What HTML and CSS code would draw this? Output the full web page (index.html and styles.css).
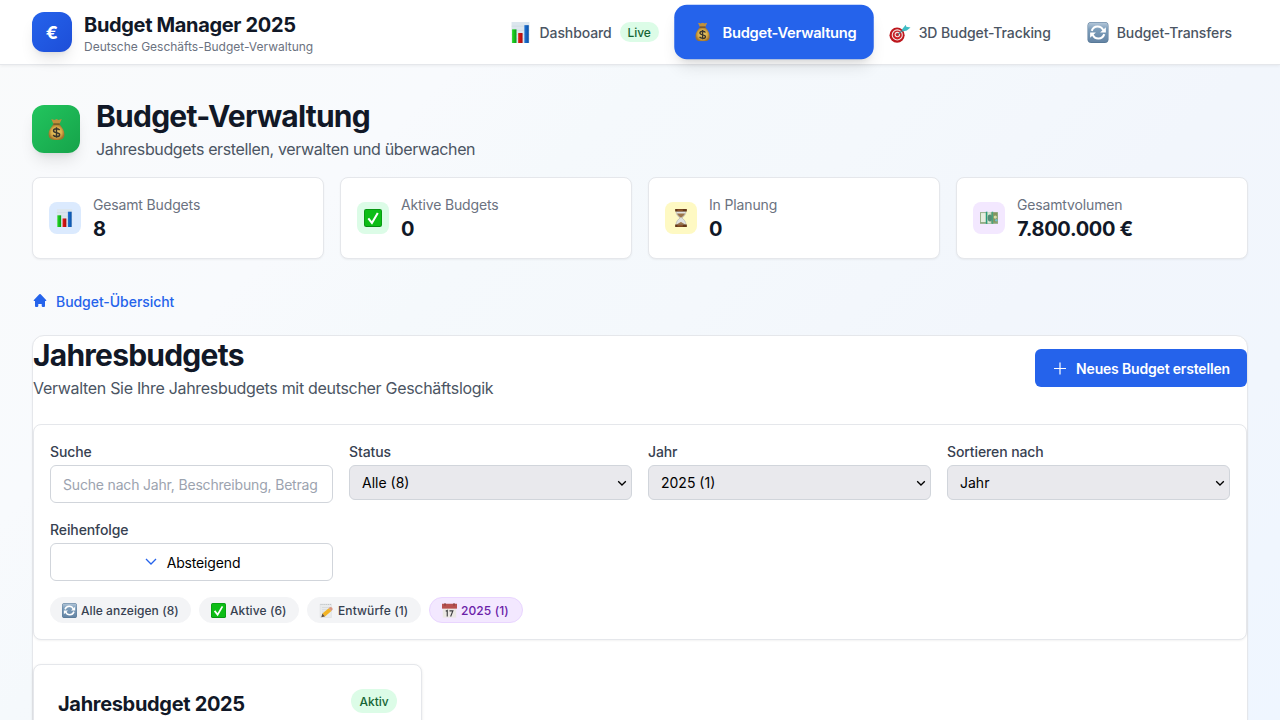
FILE: index.html
```html
<!DOCTYPE html>
<html lang="de">
<head>
<meta charset="utf-8">
<title>Budget Manager 2025</title>
<link rel="stylesheet" href="styles.css">
</head>
<body>
<svg class="sprite" aria-hidden="true">
  <defs>
    <linearGradient id="bar-g"><stop offset="0" stop-color="#27dc25"/><stop offset="1" stop-color="#079c16"/></linearGradient>
    <linearGradient id="bar-r"><stop offset="0" stop-color="#e51c17"/><stop offset="1" stop-color="#a90b0c"/></linearGradient>
    <linearGradient id="bar-b"><stop offset="0" stop-color="#2374d3"/><stop offset="1" stop-color="#0750a8"/></linearGradient>
    <linearGradient id="steel" x2="0" y2="1"><stop offset="0" stop-color="#b5c8da"/><stop offset=".35" stop-color="#7c9dba"/><stop offset="1" stop-color="#6585a5"/></linearGradient>
    <radialGradient id="gold"><stop offset="0" stop-color="#edd074"/><stop offset=".65" stop-color="#d9ad48"/><stop offset="1" stop-color="#a0712c"/></radialGradient>
    <symbol id="chart" viewBox="0 0 20 20">
      <path fill="#dce6ee" d="M1 0h17v20H1z"/><path stroke="#c5d1dc" stroke-width=".4" d="M1 4h17M1 8h17M1 12h17M1 16h17"/>
      <path fill="url(#bar-g)" d="M1.500 7h4.200v13H1.500z"/><path fill="url(#bar-r)" d="M7.300 10.500h4.200V20H7.300z"/><path fill="url(#bar-b)" d="M13.200 3h4.200v17h-4.200z"/>
    </symbol>
    <symbol id="bag" viewBox="0 0 20 20">
      <path fill="#c0903c" d="M5 0l3 1 2-1 2 1 3-1-2 4.500H7z"/>
      <path fill="url(#gold)" d="M7 5h6c1 2 5 5 4.500 10.500C17 19 15 20 10 20s-7-1-7.500-4.500C2 10 6 7 7 5z"/>
      <path fill="none" stroke="#76501f" stroke-width="1.200" d="M7 4.800h6"/>
      <path fill="none" stroke="#38342b" stroke-width="1.400" d="M13 10.500c-1-1.800-5.800-1.800-5.800.6 0 2.700 5.800 1.200 5.800 3.800 0 2.300-4.800 2.300-6.200.3M10 7.800v10"/>
    </symbol>
    <symbol id="target" viewBox="0 0 20 20">
      <circle cx="7.200" cy="12.500" r="7.200" fill="#bd171d"/><circle cx="7.400" cy="12.300" r="5.300" fill="#f2e7e4"/><circle cx="7.400" cy="12.300" r="4.300" fill="#cb1e25"/><circle cx="7.500" cy="12" r="2.600" fill="#f2e7e4"/><circle cx="7.500" cy="12" r="1.600" fill="#c52128"/>
      <path stroke="#4c7780" stroke-width="1.200" d="M8 12l7-6.500"/><path fill="#3fbcc4" d="M12 7l3.500-4.500.5 2 4 .8-3.500 2.700-4 1z"/>
    </symbol>
    <symbol id="sync" viewBox="0 0 20 20">
      <rect width="20" height="20" rx="3.500" fill="#587998"/><rect x=".5" y=".5" width="19" height="18.500" rx="3" fill="url(#steel)"/>
      <path fill="none" stroke="#fff" stroke-width="2" d="M4 8.500C6 3 13 3 15 8M16 11.500C14 17 7 17 5 12"/>
      <path fill="#fff" d="M17.500 5v5H12zM2.500 15v-5H8z"/>
    </symbol>
    <symbol id="check" viewBox="0 0 20 20">
      <rect width="20" height="20" rx="2.500" fill="#078b12"/><rect x=".7" y=".7" width="18.600" height="18.300" rx="2" fill="#0dbd16"/>
      <path fill="none" stroke="#fff" stroke-width="2.300" d="M4.800 10.500l4 5L15.300 4.500"/>
    </symbol>
    <symbol id="hourglass" viewBox="0 0 20 20">
      <path fill="#dfe2e1" stroke="#aaa79f" stroke-width=".6" d="M4.500 2.500h11c0 4-2.500 6-4.500 7.500 2 1.500 4.500 3.500 4.500 7.500h-11c0-4 2.500-6 4.500-7.500C7 8.500 4.500 6.500 4.500 2.500z"/>
      <path fill="#9c764b" d="M5.500 5h9c-1 2.500-3 3.500-4.500 4.700C8.500 8.500 6.500 7.500 5.500 5zM5.500 17.300c1-1.300 3-1.800 4.500-2.800 1 1 3.500 1.500 4.500 2.800z"/>
      <path fill="#633718" d="M3.500 0h13v2.700h-13zM3.500 17.300h13V20h-13z"/><path fill="#b77238" d="M6 .8h6v.9H6zM6 18.200h6v.9H6z"/>
    </symbol>
    <symbol id="money" viewBox="0 0 20 20">
      <path fill="#8fab82" d="M0 3.500h20v13H0z"/><path fill="#e6ede0" d="M1 4.500h5.500v10H1z"/><path fill="#289c7d" d="M6.500 3h1.800v13.500H6.500z"/><path fill="#d9e9d5" d="M8.300 3.500H12v12.500H8.300z"/>
      <ellipse cx="11" cy="10" rx="2.500" ry="3.800" fill="#568c78"/><path fill="#48a37d" d="M13 3h1.700v13.500H13z"/><path fill="#82955f" d="M14.700 4H19v11h-4.300z"/><circle cx="17" cy="9" r="1.800" fill="#d7dda9"/><circle cx="18" cy="12.500" r="1.300" fill="#6fc0cc"/>
    </symbol>
    <symbol id="memo" viewBox="0 0 20 20">
      <path fill="#e9ebec" stroke="#d5d9dc" stroke-width=".6" d="M1.500 1.500h15v18h-15z"/><path stroke="#a9afb3" stroke-width=".8" stroke-dasharray="1.500 1" d="M2 2h14"/><path stroke="#c3c9cc" stroke-width=".6" d="M4 6h11M4 9h9M4 12h7M4 15h6"/>
      <path fill="#f3b323" d="M4.500 14L13 7l3.500 3.500L8 18z"/><path fill="#d99580" d="M13 7l1.700-1.600q3.500 0 3.500 3.300L16.500 10.500z"/><path fill="#665039" d="M3 19l1.500-5L8 18z"/>
    </symbol>
    <symbol id="calendar" viewBox="0 0 20 20">
      <path fill="#ebe8e4" d="M1 5h18v14.500H1z"/><path fill="#b85150" d="M0 1h20v6.500H0z"/><path stroke="#763839" stroke-width="1.200" d="M4 0v3.500M16 0v3.500"/>
      <path fill="none" stroke="#3c3d40" stroke-width="1.500" d="M5 11l2-1v8M10 10.500h4.500L11.500 18"/>
    </symbol>
  </defs>
</svg>
<div class="page">
  <header class="topbar">
    <div class="brand">
      <div class="logo">€</div>
      <div class="brand-text"><div class="brand-name">Budget Manager 2025</div><div class="brand-sub">Deutsche Geschäfts-Budget-Verwaltung</div></div>
    </div>
    <nav class="nav">
      <a class="nav-item"><svg><use href="#chart"/></svg><span>Dashboard</span><span class="live">Live</span></a>
      <a class="nav-item active"><svg class="bag-icon"><use href="#bag"/></svg><span>Budget-Verwaltung</span></a>
      <a class="nav-item"><svg><use href="#target"/></svg><span>3D Budget-Tracking</span></a>
      <a class="nav-item"><svg><use href="#sync"/></svg><span>Budget-Transfers</span></a>
    </nav>
  </header>
  <main class="main">
    <section class="hero">
      <div class="hero-icon"><svg><use href="#bag"/></svg></div>
      <div><h1 class="title">Budget-Verwaltung</h1><p class="subtitle hero-sub">Jahresbudgets erstellen, verwalten und überwachen</p></div>
    </section>
    <section class="stats">
      <div class="stat"><div class="stat-icon blue"><svg><use href="#chart"/></svg></div><div><div class="stat-label">Gesamt Budgets</div><div class="stat-value">8</div></div></div>
      <div class="stat"><div class="stat-icon green"><svg><use href="#check"/></svg></div><div><div class="stat-label">Aktive Budgets</div><div class="stat-value">0</div></div></div>
      <div class="stat"><div class="stat-icon yellow"><svg><use href="#hourglass"/></svg></div><div><div class="stat-label">In Planung</div><div class="stat-value">0</div></div></div>
      <div class="stat"><div class="stat-icon purple"><svg><use href="#money"/></svg></div><div><div class="stat-label">Gesamtvolumen</div><div class="stat-value">7.800.000 €</div></div></div>
    </section>
    <a class="crumb"><svg viewBox="0 0 16 16"><path fill="currentColor" d="M7.300 1.300a1 1 0 0 1 1.400 0l5.400 5.600c.5.500.2 1.100-.4 1.100H13v5c0 .6-.3.900-.9.900h-1.600c-.5 0-.8-.3-.8-.8V11H6.300v2.100c0 .5-.3.800-.8.800H3.900c-.6 0-.9-.3-.9-.9V8h-.7c-.6 0-.9-.6-.4-1.100z"/></svg>Budget-Übersicht</a>
    <section class="panel">
      <div class="panel-head">
        <div><h2 class="title">Jahresbudgets</h2><p class="subtitle">Verwalten Sie Ihre Jahresbudgets mit deutscher Geschäftslogik</p></div>
        <button class="create"><svg viewBox="0 0 16 16"><path fill="none" stroke="currentColor" stroke-width="1.200" d="M8 1.500v12M2 7.500h12"/></svg>Neues Budget erstellen</button>
      </div>
      <div class="filters">
        <div class="fields">
          <div><label class="label">Suche</label><input class="control" placeholder="Suche nach Jahr, Beschreibung, Betrag"></div>
          <div><label class="label">Status</label><div class="control select"><span>Alle (8)</span><svg viewBox="0 0 10 10"><path d="M1.200 3.200L5 7l3.800-3.800"/></svg></div></div>
          <div><label class="label">Jahr</label><div class="control select"><span>2025 (1)</span><svg viewBox="0 0 10 10"><path d="M1.200 3.200L5 7l3.800-3.800"/></svg></div></div>
          <div><label class="label">Sortieren nach</label><div class="control select"><span>Jahr</span><svg viewBox="0 0 10 10"><path d="M1.200 3.200L5 7l3.800-3.800"/></svg></div></div>
          <div><label class="label">Reihenfolge</label><button class="control order"><svg viewBox="0 0 16 16"><path fill="none" stroke="#2563eb" stroke-width="1.300" d="M3 5l5 5 5-5"/></svg>Absteigend</button></div>
        </div>
        <div class="chips">
          <span class="chip c1"><svg><use href="#sync"/></svg>Alle anzeigen (8)</span>
          <span class="chip c2"><svg><use href="#check"/></svg>Aktive (6)</span>
          <span class="chip c3"><svg><use href="#memo"/></svg>Entwürfe (1)</span>
          <span class="chip c4 selected"><svg><use href="#calendar"/></svg>2025 (1)</span>
        </div>
      </div>
      <div class="budgets">
        <article class="budget"><h3 class="budget-title">Jahresbudget 2025</h3><span class="status">Aktiv</span></article>
      </div>
    </section>
  </main>
</div>
</body>
</html>
```
FILE: styles.css
```css
* { box-sizing: border-box; margin: 0; }
body { font-family: Inter, "Liberation Sans", sans-serif; color: #111827; overflow: hidden; }
svg { display: block; flex: none; }
button { font-family: inherit; }
.sprite { position: absolute; width: 0; height: 0; }
.page { height: 100vh; overflow: hidden; background: linear-gradient(135deg, #f9fafb 0%, #f8fafd 26%, #f5f9fc 36%, #f4f8fc 50%, #f2f6fc 66%, #f1f6fd 82%, #eff6ff 100%); }
.topbar { height: 65px; padding: 0 32px; display: flex; align-items: center; justify-content: space-between; background: #fff; border-bottom: 1px solid #e5e7eb; box-shadow: 0 1px 3px rgba(0,0,0,.06); }
.brand { display: flex; align-items: center; gap: 12px; }
.brand-text { padding-top: 2px; }
.logo { width: 40px; height: 40px; border-radius: 12px; display: grid; place-items: center; color: #fff; font-size: 18px; font-weight: 700; background: linear-gradient(135deg, #2563eb, #1d4ed8); box-shadow: 0 10px 15px -3px rgba(0,0,0,.1), 0 4px 6px -4px rgba(0,0,0,.1); }
.brand-name { font-size: 20px; font-weight: 700; line-height: 28px; letter-spacing: -.34px; }
.brand-sub { font-size: 12px; line-height: 16px; color: #6b7280; letter-spacing: -.01px; }
.nav { display: flex; align-items: center; gap: 4px; }
.nav-item { height: 52px; padding: 0 16px; display: flex; align-items: center; gap: 8px; border-radius: 12px; font-size: 14px; font-weight: 500; color: #4b5563; white-space: nowrap; letter-spacing: -.1px; }
.nav-item svg { width: 22px; height: 21px; }
.nav-item .bag-icon { height: 18px; }
.active { width: 190px; color: #fff; font-weight: 600; letter-spacing: -.26px; background: #2563eb; transform: scale(1.05); box-shadow: 0 10px 15px -3px rgba(0,0,0,.1), 0 4px 6px -4px rgba(0,0,0,.1); }
.live { width: 39px; height: 20px; padding: 1px 0 0; text-align: center; border-radius: 10px; background: #dcfce7; color: #166534; font-size: 12px; line-height: 20px; letter-spacing: 0; }
.main { padding: 32px 32px 0; }
.hero { display: flex; align-items: center; gap: 16px; margin-bottom: 16px; }
.hero-icon { width: 48px; height: 48px; border-radius: 12px; display: grid; place-items: center; background: linear-gradient(135deg, #22c55e, #16a34a); box-shadow: 0 10px 15px -3px rgba(0,0,0,.1), 0 4px 6px -4px rgba(0,0,0,.1); }
.hero-icon svg { width: 21px; height: 21px; }
.title { font-size: 30px; font-weight: 700; line-height: 36px; padding-top: 1px; margin-bottom: 3px; letter-spacing: -.77px; }
.subtitle { font-size: 16px; line-height: 24px; color: #4b5563; letter-spacing: -.31px; }
.hero-sub { letter-spacing: -.37px; }
.stats { display: grid; grid-template-columns: repeat(4, 1fr); gap: 16px; }
.stat { display: flex; align-items: center; gap: 12px; height: 82px; padding: 16px; border: 1px solid #e5e7eb; border-radius: 8px; background: #fff; box-shadow: 0 1px 2px rgba(0,0,0,.05); }
.stat-icon { width: 32px; height: 32px; border-radius: 8px; display: grid; place-items: center; }
.stat-icon svg { width: 18px; height: 18px; }
.blue { background: #dbeafe; }
.green { background: #dcfce7; }
.yellow { background: #fef9c3; }
.purple { background: #f3e8ff; }
.stat-label { padding-top: 2px; font-size: 14px; line-height: 20px; letter-spacing: -.15px; color: #6b7280; }
.stat-value { font-size: 20px; line-height: 28px; font-weight: 700; letter-spacing: -.35px; }
.crumb { display: flex; align-items: center; gap: 8px; height: 20px; margin: 32px 0 24px; font-size: 14px; font-weight: 500; letter-spacing: -.05px; color: #2563eb; }
.crumb svg { width: 16px; height: 16px; }
.panel { height: 900px; border: 1px solid #e5e7eb; border-radius: 12px; background: #fff; box-shadow: 0 1px 2px rgba(0,0,0,.05); }
.panel-head { display: flex; align-items: center; justify-content: space-between; margin-bottom: 24px; }
.create { width: 212px; height: 38px; padding: 1px 0 0; border: 0; border-radius: 6px; display: flex; align-items: center; justify-content: center; gap: 8px; background: #2563eb; color: #fff; font-size: 14px; font-weight: 600; letter-spacing: -.18px; white-space: nowrap; }
.create svg { width: 16px; height: 16px; }
.filters { padding: 16px; border: 1px solid #e5e7eb; border-radius: 8px; background: #fff; box-shadow: 0 1px 2px rgba(0,0,0,.05); }
.fields { display: grid; grid-template-columns: repeat(4, 1fr); gap: 16px; }
.label { display: block; padding-top: 1px; margin-bottom: 3px; font-size: 14px; font-weight: 500; line-height: 20px; letter-spacing: -.1px; color: #374151; }
.control { width: 100%; height: 38px; padding: 0 12px; border: 1px solid #d1d5db; border-radius: 6px; background: #fff; color: #000; font-family: inherit; font-size: 14px; letter-spacing: -.18px; display: flex; align-items: center; }
.control::placeholder { color: #9ca3af; }
.select { height: 35px; padding: 0 4px 0 12px; justify-content: space-between; background: #e9e9ed; letter-spacing: 0; }
.select svg { width: 10px; height: 10px; fill: none; stroke: #000; stroke-width: 1.3; }
.order { justify-content: center; gap: 8px; letter-spacing: -.16px; }
.order svg { width: 16px; height: 16px; }
.chips { display: flex; gap: 8px; margin-top: 16px; }
.chip { display: flex; align-items: center; padding-left: 11px; gap: 4px; height: 26px; border: 1px solid #f3f4f6; border-radius: 13px; background: #f3f4f6; color: #374151; font-size: 12px; font-weight: 500; letter-spacing: .1px; white-space: nowrap; }
.chip svg { width: 15px; height: 15px; }
.c1 { width: 141px; letter-spacing: .06px; }
.c2 { width: 100px; }
.c3 { width: 114px; }
.c4 { width: 94px; padding-left: 12px; }
.selected { background: #f3e8ff; border-color: #e9d5ff; color: #6b21a8; }
.budgets { display: grid; grid-template-columns: repeat(3, 1fr); gap: 24px; margin-top: 24px; }
.budget { height: 260px; padding: 24px; display: flex; align-items: flex-start; justify-content: space-between; border: 1px solid #e5e7eb; border-radius: 8px; background: #fff; box-shadow: 0 1px 3px rgba(0,0,0,.1); }
.budget-title { padding-top: 1px; font-size: 20px; font-weight: 700; line-height: 28px; letter-spacing: -.32px; }
.status { height: 24px; padding: 1px 8px 0; border-radius: 12px; background: #dcfce7; color: #166534; font-size: 12px; font-weight: 500; line-height: 24px; }
```
